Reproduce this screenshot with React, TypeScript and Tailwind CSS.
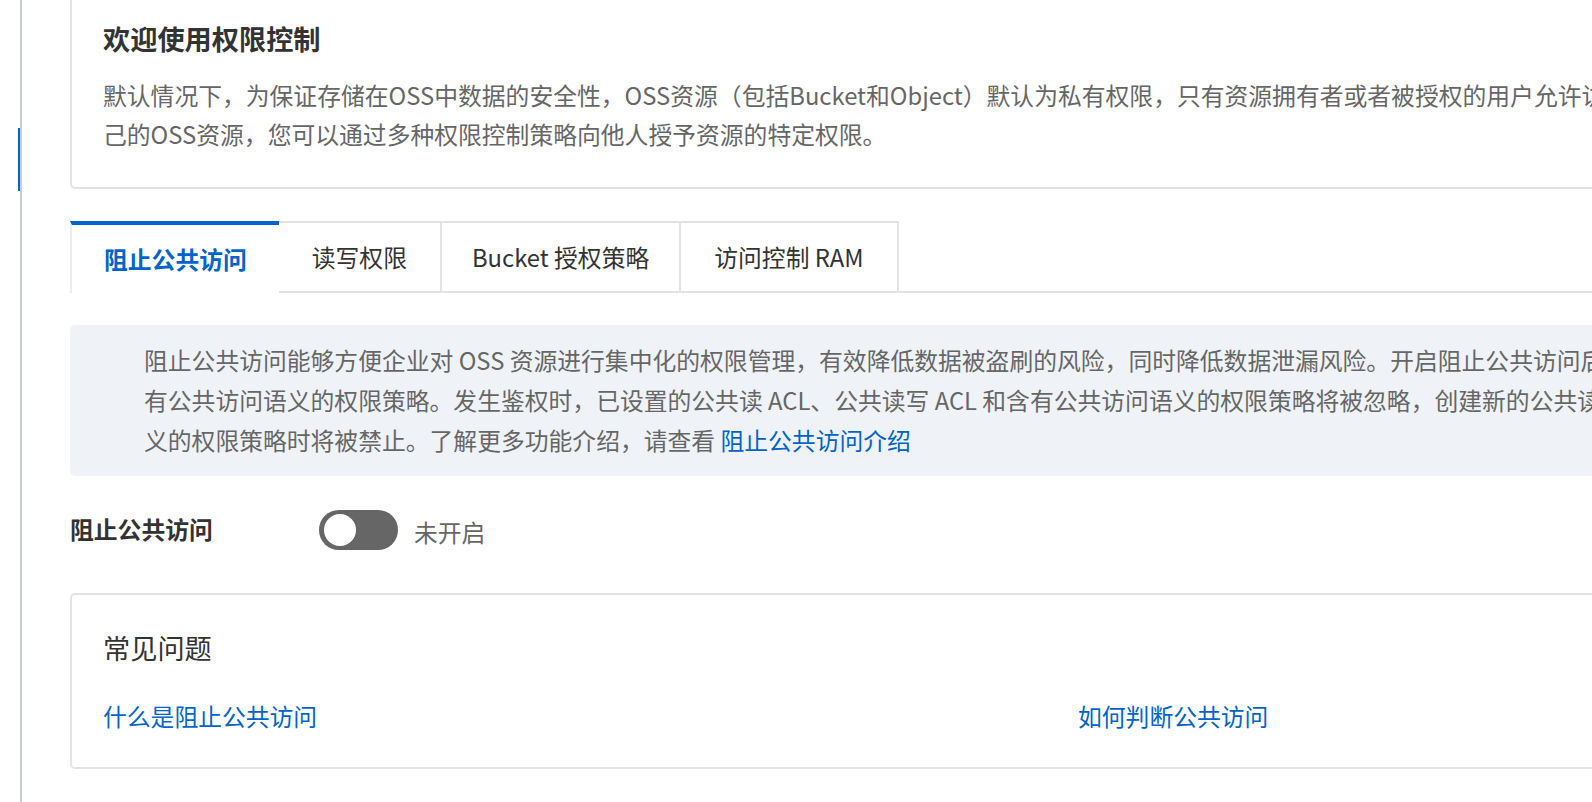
import React from "react";

const FONT = { fontFamily: '"Noto Sans CJK SC", "Noto Sans", sans-serif' };

function Tab({ label, active, px }: { label: string; active?: boolean; px: string }) {
  if (active) {
    return (
      <div className={`${px} h-[72px] shrink-0 flex items-center justify-center border-t-[4px] border-t-[#0064c8] border-l-2 border-l-[#ececec] bg-white text-[23.8px] font-bold text-[#0064c8]`}>
        {label}
      </div>
    );
  }
  return (
    <div className={`${px} h-[72px] shrink-0 flex items-center justify-center border-t-2 border-r-2 border-b-2 border-[#e3e3e3] bg-white text-[23.8px] text-[#333]`}>
      {label}
    </div>
  );
}

export default function App() {
  return (
    <div className="h-[802px] w-full overflow-hidden flex bg-white" style={FONT}>
      {/* left rail */}
      <div className="w-[20px] shrink-0 flex flex-col items-end pt-[128px]">
        <div className="w-[2px] h-[63px] bg-[#0064c8]" />
      </div>
      <div className="w-[2px] shrink-0 bg-[#c8ccd4]" />

      {/* main */}
      <div className="pl-[48px] shrink-0 w-[2064px] flex flex-col">
        {/* welcome card */}
        <div className="border-2 border-t-0 border-[#e3e3e3] rounded-b-[5px] px-[31px] pt-[18px] pb-[34px]">
          <div className="text-[27.2px] leading-[40px] font-bold text-[#333]">欢迎使用权限控制</div>
          <div className="mt-[17px] text-[23.8px] leading-[39px] text-[#666]">
            <div className="whitespace-nowrap">
              默认情况下，为保证存储在OSS中数据的安全性，OSS资源（包括Bucket和Object）默认为私有权限，只有资源拥有者或者被授权的用户允许访问和修改自
            </div>
            <div className="whitespace-nowrap">
              己的OSS资源，您可以通过多种权限控制策略向他人授予资源的特定权限。
            </div>
          </div>
        </div>

        {/* tabs */}
        <div className="mt-[32px] flex">
          <Tab label="阻止公共访问" active px="px-[32px]" />
          <Tab label="读写权限" px="px-[33px]" />
          <Tab label="Bucket 授权策略" px="px-[30px]" />
          <Tab label="访问控制 RAM" px="px-[33px]" />
          <div className="flex-1 border-b-2 border-[#e3e3e3]" />
        </div>

        {/* info box */}
        <div className="mt-[32px] rounded-[5px] bg-[#eff3f8] pl-[74px] pr-[32px] pt-[15px] pb-[16px] text-[23.8px] leading-[40px] text-[#666]">
          <div className="whitespace-nowrap">
            阻止公共访问能够方便企业对 OSS 资源进行集中化的权限管理，有效降低数据被盗刷的风险，同时降低数据泄漏风险。开启阻止公共访问后，将不允许新建公共读 ACL、公共读写 ACL 和含
          </div>
          <div className="whitespace-nowrap">
            有公共访问语义的权限策略。发生鉴权时，已设置的公共读 ACL、公共读写 ACL 和含有公共访问语义的权限策略将被忽略，创建新的公共读 ACL、公共读写 ACL 和含有公共访问语
          </div>
          <div className="whitespace-nowrap">
            义的权限策略时将被禁止。了解更多功能介绍，请查看 <span className="text-[#0064c8]">阻止公共访问介绍</span>
          </div>
        </div>

        {/* toggle row */}
        <div className="mt-[34px] flex items-center h-[40px]">
          <div className="w-[249px] shrink-0 text-[23.8px] font-bold text-[#333] -mt-[3px]">阻止公共访问</div>
          <div className="w-[79px] h-[40px] rounded-full bg-[#666] flex items-center pl-[5px] shrink-0">
            <div className="w-[32px] h-[32px] rounded-full bg-white" />
          </div>
          <div className="ml-[16px] text-[23.8px] text-[#666] mt-[3px]">未开启</div>
        </div>

        {/* FAQ card */}
        <div className="mt-[43px] border-2 border-[#e3e3e3] rounded-[5px] px-[31px] pt-[32px] pb-[32px]">
          <div className="text-[27.2px] leading-[40px] text-[#333]">常见问题</div>
          <div className="mt-[29px] grid grid-cols-2 text-[23.8px] leading-[39px] text-[#0064c8]">
            <div>什么是阻止公共访问</div>
            <div>如何判断公共访问</div>
          </div>
        </div>
      </div>
    </div>
  );
}
